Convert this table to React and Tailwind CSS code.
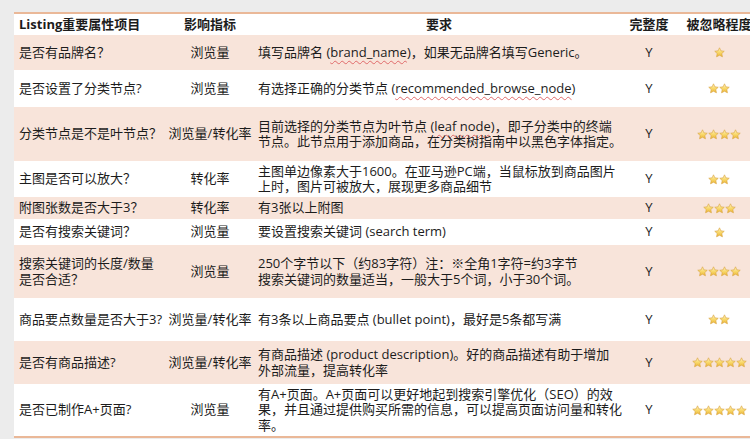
import React from "react";

const U = ({ children }) => (
  <span className="underline decoration-wavy decoration-[#e06a6a] decoration-[1px] underline-offset-[3px]">
    {children}
  </span>
);

function Star() {
  return (
    <svg width="11" height="11" viewBox="0 0 24 24" className="shrink-0">
      <defs>
        <linearGradient id="sg" x1="0" y1="0" x2="0" y2="1">
          <stop offset="0" stopColor="#fff6c2" />
          <stop offset="0.55" stopColor="#f8d664" />
          <stop offset="1" stopColor="#eab53a" />
        </linearGradient>
      </defs>
      <path
        d="M12 1.8l3.1 6.6 7.2.9-5.3 5 1.4 7.1L12 17.9l-6.4 3.5 1.4-7.1-5.3-5 7.2-.9z"
        fill="url(#sg)"
        stroke="#d9a441"
        strokeWidth="1.4"
        strokeLinejoin="round"
      />
    </svg>
  );
}

const rows = [
  {
    h: "h-[35px]",
    pink: true,
    c1: ["是否有品牌名？"],
    c2: "浏览量",
    c3: [<>填写品牌名 (<U>brand_name</U>)，如果无品牌名填写Generic。</>],
    s: 1,
  },
  {
    h: "h-[37px]",
    pink: false,
    c1: ["是否设置了分类节点?"],
    c2: "浏览量",
    c3: [<>有选择正确的分类节点 (<U>recommended_browse_node</U>)</>],
    s: 2,
  },
  {
    h: "h-[54px]",
    pink: true,
    c1: ["分类节点是不是叶节点？"],
    c2: "浏览量/转化率",
    c3: [
      <>目前选择的分类节点为叶节点 (<U>leaf node</U>)，即子分类中的终端</>,
      "节点。此节点用于添加商品，在分类树指南中以黑色字体指定。",
    ],
    s: 4,
  },
  {
    h: "h-[36px]",
    pink: false,
    c1: ["主图是否可以放大？"],
    c2: "转化率",
    c3: [
      "主图单边像素大于1600。在亚马逊PC端，当鼠标放到商品图片",
      "上时，图片可被放大，展现更多商品细节",
    ],
    s: 2,
  },
  {
    h: "h-[22px]",
    pink: true,
    c1: ["附图张数是否大于3？"],
    c2: "转化率",
    c3: ["有3张以上附图"],
    s: 3,
  },
  {
    h: "h-[26px]",
    pink: false,
    c1: ["是否有搜索关键词？"],
    c2: "浏览量",
    c3: ["要设置搜索关键词 (search term)"],
    s: 1,
  },
  {
    h: "h-[53px]",
    pink: true,
    c1: ["搜索关键词的长度/数量", "是否合适？"],
    c2: "浏览量",
    c3: [
      "250个字节以下（约83字符）注：※全角1字符=约3字节",
      "搜索关键词的数量适当，一般大于5个词，小于30个词。",
    ],
    s: 4,
  },
  {
    h: "h-[43px]",
    pink: false,
    c1: ["商品要点数量是否大于3?"],
    c2: "浏览量/转化率",
    c3: ["有3条以上商品要点 (bullet point)，最好是5条都写满"],
    s: 2,
  },
  {
    h: "h-[43px]",
    pink: true,
    c1: ["是否有商品描述?"],
    c2: "浏览量/转化率",
    c3: [
      "有商品描述 (product description)。好的商品描述有助于增加",
      "外部流量，提高转化率",
    ],
    s: 5,
  },
  {
    h: "h-[52px]",
    pink: false,
    c1: ["是否已制作A+页面?"],
    c2: "浏览量",
    c3: [
      "有A+页面。A+页面可以更好地起到搜索引擎优化（SEO）的效",
      "果，并且通过提供购买所需的信息，可以提高页面访问量和转化",
      "率。",
    ],
    s: 5,
  },
];

const grid = "grid grid-cols-[152px_88px_370px_50px_90px] w-[750px]";

export default function App() {
  return (
    <div
      className="w-[750px] h-[439px] overflow-hidden bg-[#ececec] pt-[12px] pl-[14px] text-[#1c1c1c] text-[13px] leading-[15.5px]"
      style={{ fontFamily: '"Open Sans", "Noto Sans CJK SC", sans-serif' }}
    >
      <div className="w-[760px] bg-white border-t-2 border-b-2 border-[#eab898]">
        <div className={`${grid} h-[21px] items-center font-bold bg-white`}>
          <div className="pl-[5px] whitespace-nowrap">Listing重要属性项目</div>
          <div className="text-center whitespace-nowrap">影响指标</div>
          <div className="text-center">要求</div>
          <div className="text-center whitespace-nowrap">完整度</div>
          <div className="text-center whitespace-nowrap">被忽略程度</div>
        </div>
        {rows.map((r, i) => (
          <div
            key={i}
            className={`${grid} ${r.h} items-center ${r.pink ? "bg-[#f8e4da]" : "bg-white"}`}
          >
            <div className="pl-[5px] whitespace-nowrap">
              {r.c1.map((t, j) => (
                <div key={j}>{t}</div>
              ))}
            </div>
            <div className="text-center whitespace-nowrap">{r.c2}</div>
            <div className="pl-[4px] whitespace-nowrap">
              {r.c3.map((t, j) => (
                <div key={j}>{t}</div>
              ))}
            </div>
            <div className="text-center">Y</div>
            <div className="flex justify-center items-center gap-0">
              {Array.from({ length: r.s }).map((_, j) => (
                <Star key={j} />
              ))}
            </div>
          </div>
        ))}
      </div>
    </div>
  );
}
